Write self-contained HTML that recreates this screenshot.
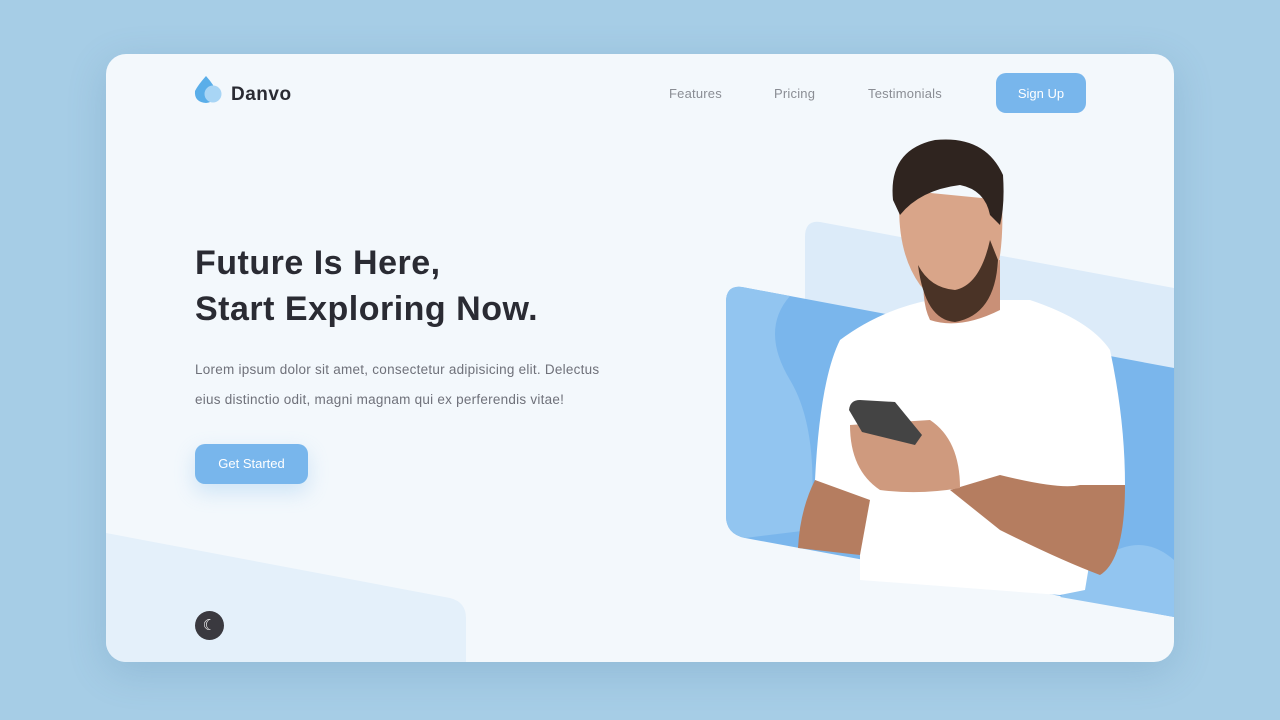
<!DOCTYPE html>
<html><head><style>
*{margin:0;padding:0;box-sizing:border-box}
body{width:1280px;height:720px;background:#a6cde6;font-family:"Liberation Sans",sans-serif;position:relative;overflow:hidden}
.card{position:absolute;left:106px;top:54px;width:1068px;height:608px;background:#f3f8fc;border-radius:20px;overflow:hidden;box-shadow:0 10px 40px rgba(60,110,150,.2)}
.abs{position:absolute}
.nav{font-size:13px;color:#8a8d94;top:86px;letter-spacing:0.2px}
h1{position:absolute;left:195px;top:240px;font-size:34px;line-height:46px;font-weight:bold;color:#2a2b33;letter-spacing:0.5px}
p{position:absolute;left:195px;top:355px;font-size:13.5px;line-height:30px;color:#6f717a;width:430px;letter-spacing:0.25px}
.btn{position:absolute;background:#78b6ec;color:#fff;font-size:13px;border-radius:10px;text-align:center}
</style></head><body>
<div class="card">
<svg width="1068" height="608" style="position:absolute;left:0;top:0">
<g transform="translate(-106,-54)">
<path d="M106 533 L450 598 Q466 602 466 618 L466 662 L106 662 Z" fill="#e4f0fa"/>
<path d="M820 222 L1174 288 L1174 400 L805 400 L805 237 Q805 220 820 222 Z" fill="#dcebf9"/>
<path d="M742 287 L1174 368 L1174 617 L745 538 Q726 534 726 516 L726 302 Q726 285 742 287 Z" fill="#7ab6ec"/>
<path d="M742 287 L790 296 Q760 330 790 380 Q820 430 810 530 L745 538 Q726 534 726 516 L726 302 Q726 285 742 287 Z" fill="#92c5f0"/>
<path d="M1100 560 Q1140 530 1174 560 L1174 617 L1060 597 Z" fill="#92c5f0"/>
<path d="M840 340 Q880 310 930 300 L1030 300 Q1090 320 1110 350 Q1125 420 1125 485 L1100 500 L1085 590 L1060 595 L860 580 L860 520 L815 480 Q820 380 840 340 Z" fill="#fff"/>
<path d="M925 260 Q920 300 930 320 Q960 330 1000 310 L1000 260 Z" fill="#c99077"/>
<path d="M900 190 Q895 250 920 285 Q950 320 985 300 Q1005 270 1002 200 Z" fill="#d9a589"/>
<path d="M918 265 Q925 320 955 322 Q995 315 998 260 L990 240 Q980 285 955 290 Q930 288 918 265 Z" fill="#4a3326"/>
<path d="M893 200 Q888 150 935 140 Q985 135 1003 175 Q1005 205 1000 225 L990 215 Q985 190 960 185 Q920 190 900 215 Z" fill="#2f241f"/>
<path d="M815 480 Q800 510 798 548 L860 555 L870 500 Z" fill="#b57d60"/>
<path d="M1000 475 Q1060 490 1080 485 L1125 485 Q1125 560 1100 575 Q1060 560 1000 530 L950 490 Z" fill="#b57d60"/>
<path d="M850 425 Q850 470 880 490 Q920 495 960 488 Q960 440 930 420 Z" fill="#cf9a7e"/>
<path d="M849 410 Q850 400 860 400 L895 402 L922 435 L915 445 L862 432 Z" fill="#444"/>
</g>
</svg>
</div>
<svg class="abs" style="left:194px;top:75px" width="32" height="30"><path d="M12 1 Q4 10 1 16 Q0 27 12 28 Q22 27 22 16 Q20 10 12 1Z" fill="#5aaee9"/><circle cx="19" cy="19" r="8.5" fill="#a8d5f5"/></svg>
<div class="abs" style="left:231px;top:84px;font-size:19px;font-weight:bold;color:#2a2b33;letter-spacing:0.5px">Danvo</div>
<div class="abs nav" style="left:669px">Features</div>
<div class="abs nav" style="left:774px">Pricing</div>
<div class="abs nav" style="left:868px">Testimonials</div>
<div class="btn" style="left:996px;top:73px;width:90px;height:40px;line-height:42px">Sign Up</div>
<h1>Future Is Here,<br>Start Exploring Now.</h1>
<p>Lorem ipsum dolor sit amet, consectetur adipisicing elit. Delectus eius distinctio odit, magni magnam qui ex perferendis vitae!</p>
<div class="btn" style="left:195px;top:444px;width:113px;height:40px;line-height:40px;box-shadow:0 8px 20px rgba(120,182,236,.3)">Get Started</div>
<div class="abs" style="left:195px;top:611px;width:29px;height:29px;border-radius:50%;background:#3a393f;color:#fff;font-size:15px;text-align:center;line-height:29px">☾</div>
</body></html>
